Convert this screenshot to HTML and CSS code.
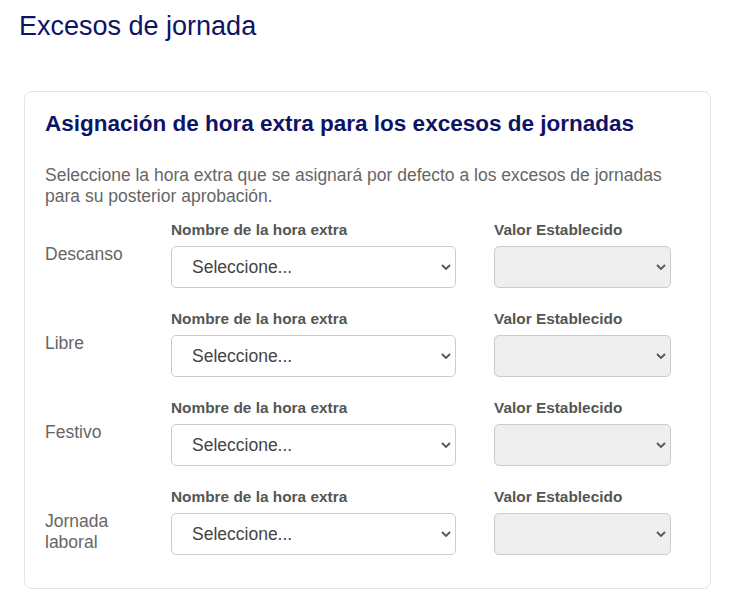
FILE: index.html
```html
<!DOCTYPE html>
<html lang="es">
<head>
<meta charset="utf-8">
<title>Excesos de jornada</title>
<link rel="stylesheet" href="styles.css">
</head>
<body>
<div class="page">
  <h1 class="page-title">Excesos de jornada</h1>
  <section class="card">
    <h2 class="card-title">Asignación de hora extra para los excesos de jornadas</h2>
    <p class="card-desc">Seleccione la hora extra que se asignará por defecto a los excesos de jornadas para su posterior aprobación.</p>
    <div class="rows">
      <div class="row">
        <div class="row-label">Descanso</div>
        <div class="field field-name">
          <label class="field-label">Nombre de la hora extra</label>
          <div class="select-wrap">
            <select class="select"><option>Seleccione...</option></select>
            <svg class="chevron" width="10" height="6" viewBox="0 0 10 6"><path d="M1 1 L5 5 L9 1" fill="none" stroke="#555" stroke-width="1.8"/></svg>
          </div>
        </div>
        <div class="field field-value">
          <label class="field-label">Valor Establecido</label>
          <div class="select-wrap">
            <select class="select" disabled><option></option></select>
            <svg class="chevron" width="10" height="6" viewBox="0 0 10 6"><path d="M1 1 L5 5 L9 1" fill="none" stroke="#555" stroke-width="1.8"/></svg>
          </div>
        </div>
      </div>
      <div class="row">
        <div class="row-label">Libre</div>
        <div class="field field-name">
          <label class="field-label">Nombre de la hora extra</label>
          <div class="select-wrap">
            <select class="select"><option>Seleccione...</option></select>
            <svg class="chevron" width="10" height="6" viewBox="0 0 10 6"><path d="M1 1 L5 5 L9 1" fill="none" stroke="#555" stroke-width="1.8"/></svg>
          </div>
        </div>
        <div class="field field-value">
          <label class="field-label">Valor Establecido</label>
          <div class="select-wrap">
            <select class="select" disabled><option></option></select>
            <svg class="chevron" width="10" height="6" viewBox="0 0 10 6"><path d="M1 1 L5 5 L9 1" fill="none" stroke="#555" stroke-width="1.8"/></svg>
          </div>
        </div>
      </div>
      <div class="row">
        <div class="row-label">Festivo</div>
        <div class="field field-name">
          <label class="field-label">Nombre de la hora extra</label>
          <div class="select-wrap">
            <select class="select"><option>Seleccione...</option></select>
            <svg class="chevron" width="10" height="6" viewBox="0 0 10 6"><path d="M1 1 L5 5 L9 1" fill="none" stroke="#555" stroke-width="1.8"/></svg>
          </div>
        </div>
        <div class="field field-value">
          <label class="field-label">Valor Establecido</label>
          <div class="select-wrap">
            <select class="select" disabled><option></option></select>
            <svg class="chevron" width="10" height="6" viewBox="0 0 10 6"><path d="M1 1 L5 5 L9 1" fill="none" stroke="#555" stroke-width="1.8"/></svg>
          </div>
        </div>
      </div>
      <div class="row">
        <div class="row-label">Jornada laboral</div>
        <div class="field field-name">
          <label class="field-label">Nombre de la hora extra</label>
          <div class="select-wrap">
            <select class="select"><option>Seleccione...</option></select>
            <svg class="chevron" width="10" height="6" viewBox="0 0 10 6"><path d="M1 1 L5 5 L9 1" fill="none" stroke="#555" stroke-width="1.8"/></svg>
          </div>
        </div>
        <div class="field field-value">
          <label class="field-label">Valor Establecido</label>
          <div class="select-wrap">
            <select class="select" disabled><option></option></select>
            <svg class="chevron" width="10" height="6" viewBox="0 0 10 6"><path d="M1 1 L5 5 L9 1" fill="none" stroke="#555" stroke-width="1.8"/></svg>
          </div>
        </div>
      </div>
    </div>
  </section>
</div>
</body>
</html>
```

FILE: styles.css
```css
* { box-sizing: border-box; }

html, body {
  margin: 0;
  padding: 0;
  background: #ffffff;
  font-family: "Liberation Sans", Arial, sans-serif;
}

.page {
  padding: 10px 24px 0 19px;
}

.page-title {
  margin: 0;
  font-size: 27px;
  line-height: 32px;
  font-weight: normal;
  color: #0d1466;
}

.card {
  margin: 49px 0 0 5px;
  width: 687px;
  border: 1px solid #e4e4e4;
  border-radius: 8px;
  padding: 19px 20px 33px 20px;
}

.card-title {
  margin: 0;
  font-size: 22.5px;
  line-height: 26px;
  font-weight: bold;
  color: #0d1466;
}

.card-desc {
  margin: 28px 0 0 0;
  font-size: 17.5px;
  line-height: 21px;
  color: #666666;
}

.rows {
  margin-top: 14px;
  display: flex;
  flex-direction: column;
  gap: 22px;
}

.row {
  display: flex;
  align-items: flex-start;
}

.row-label {
  width: 126px;
  padding: 23px 15px 0 0;
  font-size: 17.5px;
  line-height: 21px;
  color: #666666;
}

.field {
  display: flex;
  flex-direction: column;
}

.field-name {
  width: 285px;
}

.field-value {
  width: 177px;
  margin-left: 38px;
}

.field-label {
  font-size: 15.4px;
  line-height: 18px;
  font-weight: bold;
  color: #555555;
  margin-bottom: 7px;
}

.select-wrap {
  position: relative;
  height: 42px;
}

.select {
  -webkit-appearance: none;
  appearance: none;
  display: block;
  height: 42px;
  width: 100%;
  border: 1px solid #cccccc;
  border-radius: 5px;
  background: #ffffff;
  padding: 0 24px 0 20px;
  font-family: "Liberation Sans", Arial, sans-serif;
  font-size: 17.5px;
  color: #444444;
}

.select:disabled {
  background: #eeeeee;
  opacity: 1;
}

.chevron {
  position: absolute;
  right: 5px;
  top: 18px;
  pointer-events: none;
}
```
